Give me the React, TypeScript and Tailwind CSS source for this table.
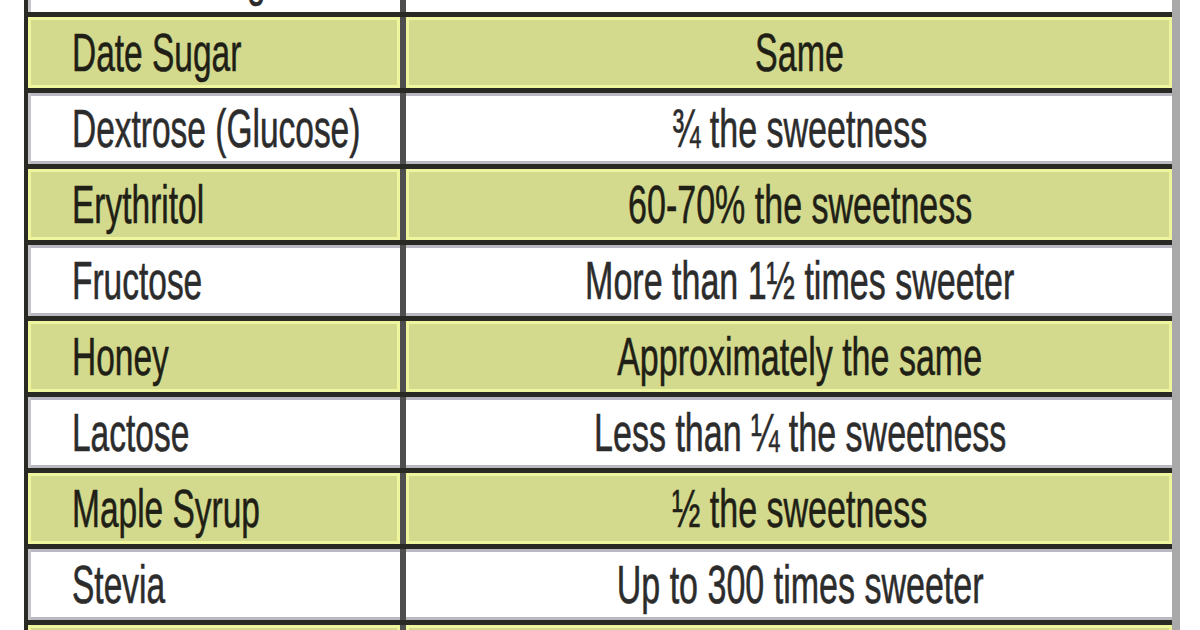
const rows = [
  { name: "Date Sugar", value: "Same" },
  { name: "Dextrose (Glucose)", value: "¾ the sweetness" },
  { name: "Erythritol", value: "60-70% the sweetness" },
  { name: "Fructose", value: "More than 1½ times sweeter" },
  { name: "Honey", value: "Approximately the same" },
  { name: "Lactose", value: "Less than ¼ the sweetness" },
  { name: "Maple Syrup", value: "½ the sweetness" },
  { name: "Stevia", value: "Up to 300 times sweeter" },
];

function Row({ name, value, green }: { name: string; value: string; green: boolean }) {
  const left = green
    ? "bg-[#d3da8e] shadow-[inset_0_0_0_3px_#eef59d] text-[#1f1f16]"
    : "bg-white shadow-[inset_3px_0_0_#c4c4ca,inset_0_3px_0_#b9b9c1,inset_0_-3px_0_#b9b9c1] text-[#2c2c2c]";
  const right = green
    ? "bg-[#d3da8e] shadow-[inset_0_0_0_3px_#eef59d] text-[#1f1f16]"
    : "bg-white shadow-[inset_0_3px_0_#b9b9c1,inset_0_-3px_0_#b9b9c1] text-[#2c2c2c]";
  return (
    <div className="flex h-[76px] border-t-[5px] border-[#2a2a25]">
      <div className={`w-[372px] h-full pl-[44px] leading-[70px] ${left}`}>
        <span className="inline-block origin-left scale-x-[0.62] whitespace-nowrap">{name}</span>
      </div>
      <div className="w-[6px] h-full bg-[#4e4e4e]" />
      <div className={`flex-1 h-full pl-[22px] text-center leading-[70px] ${right}`}>
        <span className="inline-block origin-center scale-x-[0.63] whitespace-nowrap">{value}</span>
      </div>
    </div>
  );
}

export default function App() {
  return (
    <div className="w-[1200px] h-[630px] overflow-hidden bg-white font-['Liberation_Sans',Arial,sans-serif] text-[54px] [-webkit-text-stroke:0.6px_currentColor]">
      <div className="ml-[24px] w-[1156px] border-l-4 border-r-[8px] border-l-[#2a2a25] border-r-[#a9a9a9]">
        {/* header row, cut off at the top */}
        <div className="flex h-[12px] overflow-hidden">
          <div className="w-[372px] h-full relative bg-white shadow-[inset_3px_0_0_#c4c4ca]">
            <span className="absolute left-[44px] top-[-51px] leading-[54px] inline-block origin-left scale-x-[0.62] whitespace-nowrap text-[#2c2c2c]">
              Coconut Sugar
            </span>
          </div>
          <div className="w-[6px] h-full bg-[#4e4e4e]" />
          <div className="flex-1 h-full bg-white" />
        </div>
        {rows.map((r, i) => (
          <Row key={r.name} name={r.name} value={r.value} green={i % 2 === 0} />
        ))}
        <div className="flex h-[76px] border-t-[5px] border-[#2a2a25]">
          <div className="w-[372px] h-full bg-[#d3da8e] shadow-[inset_0_0_0_3px_#eef59d]" />
          <div className="w-[6px] h-full bg-[#4e4e4e]" />
          <div className="flex-1 h-full bg-[#d3da8e] shadow-[inset_0_0_0_3px_#eef59d]" />
        </div>
      </div>
    </div>
  );
}
